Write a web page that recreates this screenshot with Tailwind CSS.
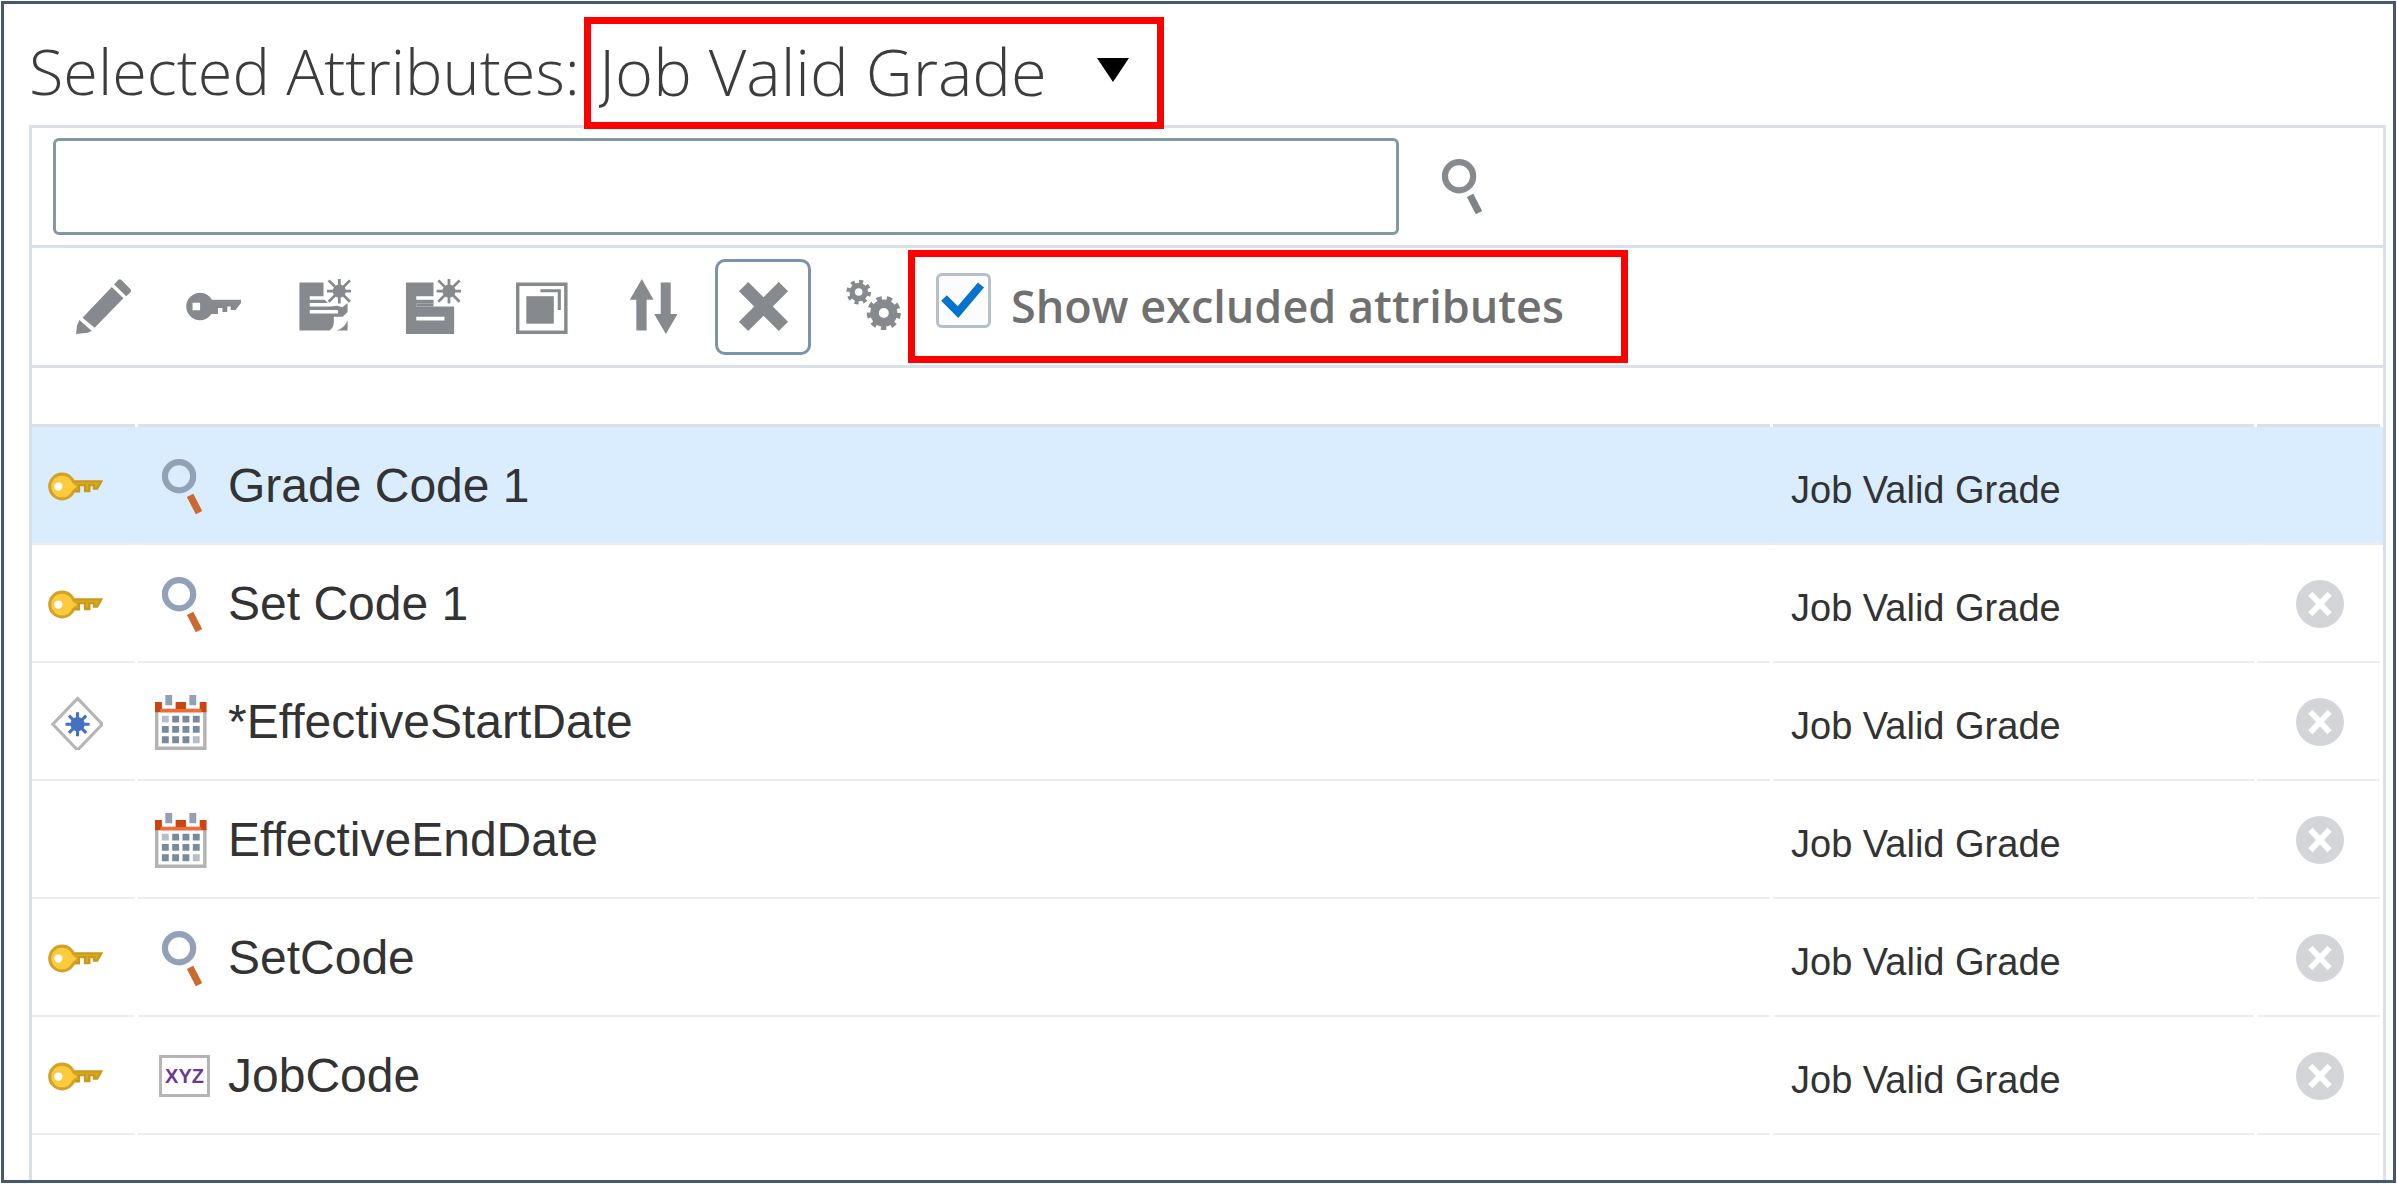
<!DOCTYPE html>
<html lang="en">
<head>
<meta charset="utf-8">
<title>Selected Attributes</title>
<script src="https://cdn.jsdelivr.net/npm/@tailwindcss/browser@4"></script>
</head>
<body class="bg-white">
<svg class="hidden" aria-hidden="true">
  <symbol id="lens" viewBox="0 0 16 16">
    <circle cx="7" cy="5" r="4.1" fill="none" stroke="currentColor" stroke-width="1.8"/>
    <path d="M10.2 10.6 12.8 15.6" fill="none" stroke="var(--handle)" stroke-width="2.1"/>
  </symbol>
  <symbol id="key" viewBox="0 0 16 16">
    <path fill-rule="evenodd" d="M4 4a4 4 0 0 1 3.5 2H16V7L14.4 9H13V8H12V9.6H10.6V8.4H9.3V10.2H7.4A4 4 0 1 1 4 4ZM1.9 6.9V9.1H4.1V6.9Z" fill="currentColor"/>
  </symbol>
  <symbol id="goldkey" viewBox="0 0 16 16">
    <path d="M7.5 6.5H15.5L14.3 8.6H13.4V7.6H12V9.3H10.8V7.6H9V9.4H7.5Z" fill="#dba91c" stroke="#c79a1c" stroke-width=".7"/>
    <circle cx="4.1" cy="8" r="3.6" fill="#fccb3c" stroke="#d3a127" stroke-width=".9"/>
    <path d="M7 6.9 8.4 8 7 9.2Z" fill="#fccb3c"/>
    <circle cx="3" cy="8" r="1.2" fill="#fff"/>
  </symbol>
  <symbol id="sun" viewBox="0 0 8 8">
    <circle cx="4" cy="4" r="1.9" fill="currentColor"/>
    <path d="M4 .4V7.6M.4 4H7.6M.9.9 7.1 7.1M7.1.9.9 7.1" stroke="currentColor" stroke-width=".8"/>
  </symbol>
  <symbol id="calendar" viewBox="0 0 16 16">
    <path d="M.5 4.5V15.5H14.5V4.5" fill="#fff" stroke="#b3b3b3"/>
    <path d="M0 2H2V4H13V2H15V5H0Z M6 2H9V4.5H6Z" fill="#cc4410"/>
    <path d="M1.5 4.1H13.5V5H1.5Z" fill="#f26a35"/>
    <path d="M3 0H5V3H3ZM10 0H12V3H10Z" fill="#949fb3"/>
    <path d="M5 6H7V8H5ZM8 6H10V8H8ZM11 6H13V8H11ZM2 9H4V11H2ZM5 9H7V11H5ZM8 9H10V11H8ZM11 9H13V11H11ZM2 12H4V14H2ZM5 12H7V14H5ZM8 12H10V14H8Z" fill="#788a9b"/>
    <path d="M2 6H4V8H2ZM11 12H13V14H11Z" fill="#b4bdc8"/>
  </symbol>
  <symbol id="diamond" viewBox="0 0 16 16">
    <path d="M8.6 1 15.8 8.5 8.6 16 1.4 8.5Z" fill="#fff" stroke="#b5b5b5" stroke-width=".9"/>
    <circle cx="8.6" cy="8.5" r="2.1" fill="#4472c0"/>
    <path d="M8.6 5V12M5.1 8.5H12.1M6.1 6 11.1 11M11.1 6 6.1 11" stroke="#4472c0" stroke-width=".9"/>
  </symbol>
  <symbol id="remove" viewBox="0 0 14 14">
    <circle cx="7" cy="7" r="7" fill="#d3d5d8"/>
    <path d="M4.2 4 9.8 10M9.8 4 4.2 10" stroke="#fff" stroke-width="1.7"/>
  </symbol>
</svg>

<div class="min-h-screen p-px flex">
<main class="flex-1 flex flex-col border-3 border-[#44586e] pl-[25px] pr-[7px] pt-[13px] font-['Liberation_Sans',Arial,sans-serif] text-[#333]">

  <header class="relative z-10 -mb-1 flex items-stretch leading-[90px] text-[#3c3c3c] font-light font-['Open_Sans',sans-serif]">
    <label for="group" class="flex items-center w-[555px] whitespace-nowrap pb-1 text-[63px]">Selected Attributes:</label>
    <div class="relative h-28 w-[580px] border-7 border-[#ff0000] bg-white">
      <select id="group" class="appearance-none w-full h-full pl-2 pb-1 bg-transparent outline-none text-[65px]">
        <option>Job Valid Grade</option>
      </select>
      <svg class="absolute right-7 top-[34px] w-8 h-6 pointer-events-none" viewBox="0 0 32 24"><path d="M0 0H32L16 24Z" fill="#000"/></svg>
    </div>
  </header>

  <section class="flex-1 flex flex-col border-3 border-b-0 border-[#d9e1e7]">
    <form class="flex items-center gap-[26px] py-2.5 pl-[21px] border-b-3 border-[#d9e1e7]">
      <input type="text" aria-label="Search attributes" class="w-[1346px] h-[97px] px-4 text-[48px] border-3 border-[#8398a3] rounded-md outline-none">
      <button type="button" aria-label="Search" class="p-2.5 text-[#868a8e] [--handle:#7f8488]"><svg class="size-[55px]"><use href="#lens"/></svg></button>
    </form>

    <div class="flex items-center gap-3.5 py-0.5 pl-[23px] border-b-3 border-[#d9e1e7] text-[#868a8e]">
      <button aria-label="Edit" class="size-24 grid place-items-center"><svg class="size-[55px]" viewBox="0 0 16 16" fill="currentColor"><path d="M1.9 11.3 10.4 2.3 13.8 5.6 5.4 14.2ZM11.1 1.6 12.3.2Q12.7-.1 13.1.2L15.8 2.9Q16.2 3.4 15.8 3.9L14.6 5ZM1 11.9 4.6 15.1 3.4 15.6 0 16 .3 13.5Z"/></svg></button>
      <button aria-label="Set as key" class="size-24 grid place-items-center"><svg class="size-[55px]"><use href="#key"/></svg></button>
      <button aria-label="New note" class="size-24 grid place-items-center"><svg class="size-[55px]" viewBox="0 0 16 16" fill="currentColor"><path fill-rule="evenodd" d="M1 1H8V5H4V6H8.3L9.3 7H4V8H10L12 7.8 13.5 8.2 15 7V9.6L13.6 11H11V12.6Q11 14 9.8 15H1ZM4 9V10H12.2V9ZM15 11.9V15H11.8Q14.5 14 15 11.9Z"/><use href="#sun" x="8.6" y="-.5" width="8" height="8"/></svg></button>
      <button aria-label="New document" class="size-24 grid place-items-center"><svg class="size-[55px]" viewBox="0 0 16 16" fill="currentColor"><path fill-rule="evenodd" d="M0 1H8V5H3V6H8V7.1H3V8.1H3V9.1H10.5V8H14V16H0ZM3 8V9.1H10.5V8ZM3 11V12.1H11.2V11Z"/><path d="M3 7.1H8V8H3Z"/><use href="#sun" x="8.5" y="-.5" width="8" height="8"/></svg></button>
      <button aria-label="Group" class="size-24 grid place-items-center"><svg class="size-[55px]" viewBox="0 0 16 16"><path d="M.5 1.5H14.5V15.5H.5Z" fill="none" stroke="currentColor"/><path d="M3 5H11V13H3Z" fill="currentColor"/><path d="M7.1 3.4H12.6V9" fill="none" stroke="currentColor" stroke-width=".9"/></svg></button>
      <button aria-label="Reorder" class="size-24 grid place-items-center"><svg class="size-[55px]" viewBox="0 0 16 16" fill="currentColor"><path d="M4.6 0 8 6H6V15H3V6H1.1ZM10.1 1H13V10.2H15L11.6 16 8.2 10.2H10.1Z"/></svg></button>
      <button aria-label="Exclude" class="size-24 grid place-items-center border-3 border-[#7a94ab] rounded-[10px]"><svg class="size-[55px]" viewBox="0 0 16 16"><path d="M2.2 2.2 13.8 13.8M13.8 2.2 2.2 13.8" stroke="currentColor" stroke-width="3.8"/></svg></button>
      <button aria-label="Settings" class="size-24 grid place-items-center"><svg class="size-[55px]" viewBox="0 0 16 16" fill="none" stroke="currentColor"><circle cx="3.7" cy="3.8" r="1.9" stroke-width="1.6"/><circle cx="3.7" cy="3.8" r="3" stroke-width="1.2" stroke-dasharray="1.15 1.21"/><circle cx="11" cy="9.9" r="2.7" stroke-width="2.5"/><circle cx="11" cy="9.9" r="4.2" stroke-width="1.5" stroke-dasharray="1.5 1.43"/></svg></button>
      <label class="-ml-[27px] h-[113px] w-[720px] flex items-start gap-5 pl-[21px] pt-4 border-7 border-[#ff0000] bg-white text-[45px] leading-[66px] font-semibold font-['Open_Sans',sans-serif] text-[#707070] whitespace-nowrap">
        <span class="relative size-[55px] shrink-0">
          <input type="checkbox" checked class="appearance-none block size-full border-3 border-[#b5c0c8] rounded-md bg-[#fcfcfe]">
          <svg class="absolute inset-0 size-full pointer-events-none" viewBox="0 0 55 55"><path d="M8 25 22 39 45 12" fill="none" stroke="#0572ce" stroke-width="8"/></svg>
        </span>
        Show excluded attributes
      </label>
    </div>

    <table class="w-full table-fixed border-collapse text-left [&_td]:relative [&_th]:relative [&_td]:p-0 [&_td]:h-[118px] [&_th]:h-[59px] [&_td]:after:absolute [&_td]:after:bottom-0 [&_td]:after:left-0 [&_td]:after:right-[3px] [&_td]:after:h-0.5 [&_td]:after:bg-[#ededed] [&_th]:after:absolute [&_th]:after:bottom-0 [&_th]:after:left-0 [&_th]:after:right-[3px] [&_th]:after:h-[3px] [&_th]:after:bg-[#d9e1e7]">
      <thead>
        <tr><th class="w-[106px]" aria-label="Key"></th><th aria-label="Attribute"></th><th class="w-[484px]" aria-label="Group"></th><th class="w-[126px]" aria-label="Remove"></th></tr>
      </thead>
      <tbody class="[--handle:#cc6930]">
        <tr class="bg-[#d9edff]">
          <td><svg class="ml-4 size-[55px]"><use href="#goldkey"/></svg></td>
          <td><div class="flex items-center gap-[18px] pl-[17px] text-[48px]"><svg class="size-[55px] text-[#93a1b8]"><use href="#lens"/></svg>Grade Code 1</div></td>
          <td><div class="pl-[18px] pt-2 text-[38px]">Job Valid Grade</div></td>
          <td></td>
        </tr>
        <tr>
          <td><svg class="ml-4 size-[55px]"><use href="#goldkey"/></svg></td>
          <td><div class="flex items-center gap-[18px] pl-[17px] text-[48px]"><svg class="size-[55px] text-[#93a1b8]"><use href="#lens"/></svg>Set Code 1</div></td>
          <td><div class="pl-[18px] pt-2 text-[38px]">Job Valid Grade</div></td>
          <td><button aria-label="Remove" class="block mx-auto"><svg class="size-12"><use href="#remove"/></svg></button></td>
        </tr>
        <tr>
          <td><svg class="ml-4 size-[55px]"><use href="#diamond"/></svg></td>
          <td><div class="flex items-center gap-[18px] pl-[17px] text-[48px]"><svg class="size-[55px]"><use href="#calendar"/></svg>*EffectiveStartDate</div></td>
          <td><div class="pl-[18px] pt-2 text-[38px]">Job Valid Grade</div></td>
          <td><button aria-label="Remove" class="block mx-auto"><svg class="size-12"><use href="#remove"/></svg></button></td>
        </tr>
        <tr>
          <td></td>
          <td><div class="flex items-center gap-[18px] pl-[17px] text-[48px]"><svg class="size-[55px]"><use href="#calendar"/></svg>EffectiveEndDate</div></td>
          <td><div class="pl-[18px] pt-2 text-[38px]">Job Valid Grade</div></td>
          <td><button aria-label="Remove" class="block mx-auto"><svg class="size-12"><use href="#remove"/></svg></button></td>
        </tr>
        <tr>
          <td><svg class="ml-4 size-[55px]"><use href="#goldkey"/></svg></td>
          <td><div class="flex items-center gap-[18px] pl-[17px] text-[48px]"><svg class="size-[55px] text-[#93a1b8]"><use href="#lens"/></svg>SetCode</div></td>
          <td><div class="pl-[18px] pt-2 text-[38px]">Job Valid Grade</div></td>
          <td><button aria-label="Remove" class="block mx-auto"><svg class="size-12"><use href="#remove"/></svg></button></td>
        </tr>
        <tr>
          <td><svg class="ml-4 size-[55px]"><use href="#goldkey"/></svg></td>
          <td><div class="flex items-center gap-[18px] pl-[17px] text-[48px]"><span class="w-[55px] pl-1 flex"><span class="w-full h-[42px] grid place-items-center border-3 border-[#b5b5b5] bg-white text-[20px] leading-6 font-bold text-[#6a3a93]">XYZ</span></span>JobCode</div></td>
          <td><div class="pl-[18px] pt-2 text-[38px]">Job Valid Grade</div></td>
          <td><button aria-label="Remove" class="block mx-auto"><svg class="size-12"><use href="#remove"/></svg></button></td>
        </tr>
      </tbody>
    </table>
  </section>
</main>
</div>
</body>
</html>
